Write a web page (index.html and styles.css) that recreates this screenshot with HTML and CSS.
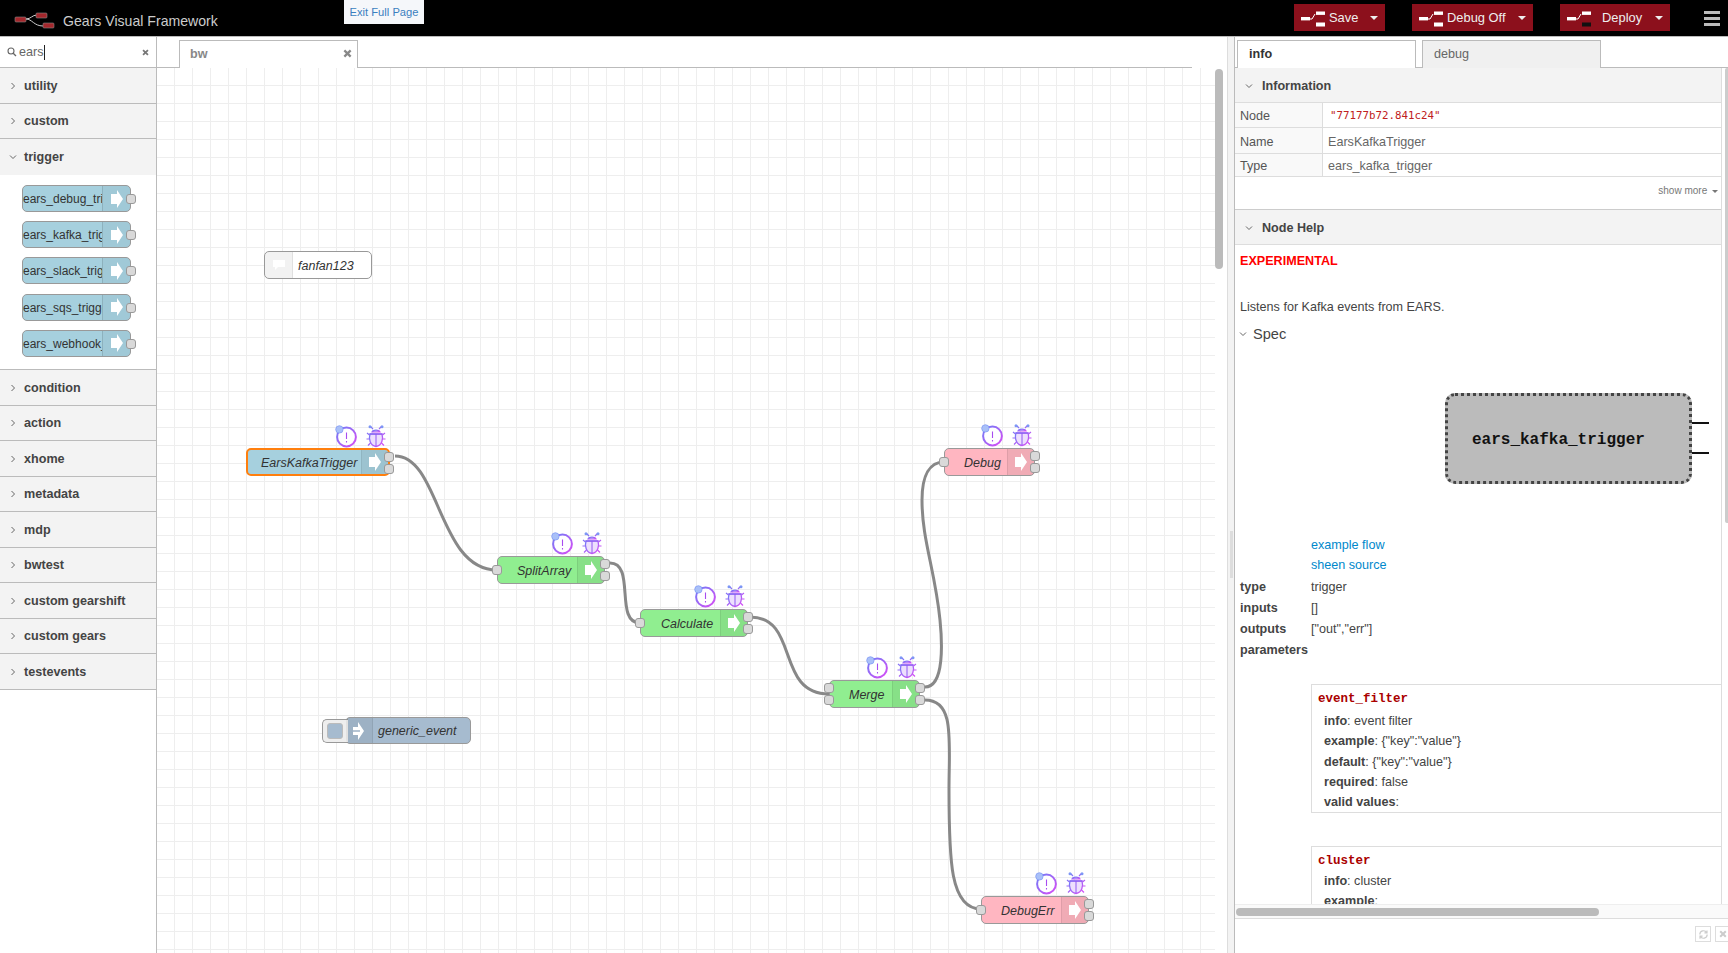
FILE: index.html
```html
<!DOCTYPE html>
<html lang="en">
<head>
  <meta charset="UTF-8" />
  <title>Gears Visual Framework</title>
  <link rel="stylesheet" href="styles.css">
</head>
<body>
  <svg class="defs" width="0" height="0">
    <defs>
      <symbol id="arrow" viewBox="0 0 12 18"><path d="M0 4H6V0L12 9L6 18V14H0Z" fill="#fff"/></symbol>
      <symbol id="chev-r" viewBox="0 0 8 8"><path d="M2.5 1L5.5 4L2.5 7" fill="none" stroke="#666" stroke-width="1"/></symbol>
      <symbol id="chev-d" viewBox="0 0 8 8"><path d="M1 2.5L4 5.5L7 2.5" fill="none" stroke="#666" stroke-width="1"/></symbol>
      <symbol id="cross" viewBox="0 0 8 8"><path d="M1.2 1.2L6.8 6.8M6.8 1.2L1.2 6.8" stroke="currentColor" stroke-width="2"/></symbol>
      <linearGradient id="purple" x1="0" y1="0" x2="1" y2="1">
        <stop offset="0" stop-color="#6f7cf7"/><stop offset="1" stop-color="#d84cf5"/>
      </linearGradient>
      <symbol id="alert" viewBox="0 0 22 23">
        <circle cx="11.5" cy="12" r="9.4" fill="#fff" stroke="url(#purple)" stroke-width="2"/>
        <circle cx="4.4" cy="4.4" r="3.7" fill="#a9c0f8" stroke="#7d96f5" stroke-width=".7"/>
        <path d="M11.5 7.5V14M11.5 16V17.4" stroke="#a84cf0" stroke-width="1.1"/>
      </symbol>
      <symbol id="bug" viewBox="0 0 20 23">
        <path d="M6 7C7 4.5 13 4.5 14 7Z" fill="#b9c3fb" stroke="url(#purple)" stroke-width="1.2"/>
        <path d="M4 9H16C17.5 14 16 20.5 10 21.5C4 20.5 2.5 14 4 9Z" fill="#eddffd" stroke="url(#purple)" stroke-width="1.3"/>
        <path d="M3.5 9H16.5M10 9V21" stroke="#9058f2" stroke-width="1"/>
        <path d="M7 4L4.5 1.5M13 4L15.5 1.5M3.5 10L1 8M16.5 10L19 8M3 14H.5M17 14H19.5M4.5 18L2 20.5M15.5 18L18 20.5" stroke="url(#purple)" stroke-width="1.2" fill="none"/>
        <circle cx="4" cy="1.8" r="1.5" fill="#7d96f5"/><circle cx="16" cy="1.8" r="1.5" fill="#7d96f5"/>
      </symbol>
      <symbol id="flow" viewBox="0 0 24 16">
        <path d="M9 8H11L14 3" fill="none" stroke="currentColor" stroke-width="1"/>
        <rect y="6" width="9" height="3.4" fill="currentColor"/>
        <rect x="15" y="0.5" width="9" height="3.4" fill="currentColor"/>
      </symbol>
    </defs>
  </svg>

  <header class="topbar">
    <div class="brand">
      <svg class="brand-logo" width="42" height="18" viewBox="0 0 42 18">
        <path d="M12 7C17 7 18 3 23 3M12 7C18 7 20 14 29 14" fill="none" stroke="#ccc" stroke-width="1"/>
        <rect x="1" y="5" width="11" height="5" rx="1" fill="#a3272c" stroke="#888" stroke-width=".6"/>
        <rect x="22" y="1" width="11" height="5" rx="1" fill="#a3272c" stroke="#888" stroke-width=".6"/>
        <rect x="29" y="11" width="11" height="5" rx="1" fill="#a3272c" stroke="#888" stroke-width=".6"/>
      </svg>
      <span class="brand-title">Gears Visual Framework</span>
    </div>
    <a class="exit-page">Exit Full Page</a>
    <div class="actions">
      <div class="btn btn-save">
        <svg class="btn-icon" width="24" height="16"><use href="#flow"/><rect x="15" y="11.5" width="9" height="4" fill="#fff"/></svg>
        <span>Save</span><i class="caret"></i>
      </div>
      <div class="btn btn-debug">
        <svg class="btn-icon" width="24" height="16"><use href="#flow"/><rect x="15" y="11.5" width="9" height="4" fill="#fff"/></svg>
        <span>Debug Off</span><i class="caret"></i>
      </div>
      <div class="btn btn-deploy">
        <svg class="btn-icon" width="24" height="16"><use href="#flow"/><rect x="15" y="11.5" width="9" height="4" fill="#111"/></svg>
        <span>Deploy</span><i class="caret"></i>
      </div>
      <div class="menu-btn"><i></i><i></i><i></i></div>
    </div>
  </header>

  <main class="main">
    <aside class="palette">
      <div class="search">
        <svg width="10" height="10" viewBox="0 0 10 10"><circle cx="4" cy="4" r="3" fill="none" stroke="#666" stroke-width="1.1"/><path d="M6.2 6.2L9 9" stroke="#666" stroke-width="1.3"/></svg>
        <span class="search-text">ears</span>
        <svg class="search-clear" width="7" height="7"><use href="#cross"/></svg>
      </div>
      <div class="cat"><svg width="8" height="8"><use href="#chev-r"/></svg>utility</div>
      <div class="cat"><svg width="8" height="8"><use href="#chev-r"/></svg>custom</div>
      <div class="cat cat-open"><svg width="8" height="8"><use href="#chev-d"/></svg>trigger</div>
      <div class="cat-list">
        <div class="pal-node"><span class="pal-label">ears_debug_trigger</span><span class="pal-icon"><svg width="12" height="18"><use href="#arrow"/></svg></span><i class="pal-port"></i></div>
        <div class="pal-node"><span class="pal-label">ears_kafka_trigger</span><span class="pal-icon"><svg width="12" height="18"><use href="#arrow"/></svg></span><i class="pal-port"></i></div>
        <div class="pal-node"><span class="pal-label">ears_slack_trigger</span><span class="pal-icon"><svg width="12" height="18"><use href="#arrow"/></svg></span><i class="pal-port"></i></div>
        <div class="pal-node"><span class="pal-label">ears_sqs_trigger</span><span class="pal-icon"><svg width="12" height="18"><use href="#arrow"/></svg></span><i class="pal-port"></i></div>
        <div class="pal-node"><span class="pal-label">ears_webhook_trigger</span><span class="pal-icon"><svg width="12" height="18"><use href="#arrow"/></svg></span><i class="pal-port"></i></div>
      </div>
      <div class="cat"><svg width="8" height="8"><use href="#chev-r"/></svg>condition</div>
      <div class="cat"><svg width="8" height="8"><use href="#chev-r"/></svg>action</div>
      <div class="cat"><svg width="8" height="8"><use href="#chev-r"/></svg>xhome</div>
      <div class="cat"><svg width="8" height="8"><use href="#chev-r"/></svg>metadata</div>
      <div class="cat"><svg width="8" height="8"><use href="#chev-r"/></svg>mdp</div>
      <div class="cat"><svg width="8" height="8"><use href="#chev-r"/></svg>bwtest</div>
      <div class="cat"><svg width="8" height="8"><use href="#chev-r"/></svg>custom gearshift</div>
      <div class="cat"><svg width="8" height="8"><use href="#chev-r"/></svg>custom gears</div>
      <div class="cat"><svg width="8" height="8"><use href="#chev-r"/></svg>testevents</div>
    </aside>

    <section class="workspace">
      <div class="ws-tabs">
        <div class="ws-tab"><span>bw</span><svg width="9" height="9"><use href="#cross"/></svg></div>
      </div>
      <div class="ws-body">
        <div class="canvas">
          <svg class="wires" width="1058" height="885" viewBox="157 68 1058 885">
            <path d="M395 456C440 456 438 570 497 570"/>
            <path d="M610 563C636 563 614 623 640 623"/>
            <path d="M750 617C800 617 775 694 829 694"/>
            <path d="M925 687C945 687 942 640 940 620C935 570 922 540 922 500C922 475 930 462 944 462"/>
            <path d="M925 700C955 700 949 740 949 790C949 860 950 909 981 909"/>
          </svg>

          <div class="comment"><span class="comment-icon"><svg width="14" height="12" viewBox="0 0 14 12"><path d="M1 1H13V8H6L3 11V8H1Z" fill="#fff"/></svg></span><span class="node-text">fanfan123</span></div>

          <div class="inject">
            <span class="inject-btn"><i></i></span>
            <span class="inject-icon"><svg width="12" height="20" viewBox="0 0 12 20"><path d="M0 6H5V1L11 10L5 19V14H0ZM0 9.3V10.7H7V9.3Z" fill="#fff"/></svg></span>
            <span class="node-text">generic_event</span>
          </div>

          <div class="node node-trigger node-selected n-kafka">
            <span class="node-text">EarsKafkaTrigger</span>
            <span class="node-icon"><svg width="12" height="18"><use href="#arrow"/></svg></span>
            <i class="port out-1"></i><i class="port out-2"></i>
            <div class="badges"><svg width="22" height="23"><use href="#alert"/></svg><svg width="20" height="23"><use href="#bug"/></svg></div>
          </div>

          <div class="node node-green n-split">
            <i class="port in"></i>
            <span class="node-text">SplitArray</span>
            <span class="node-icon"><svg width="12" height="18"><use href="#arrow"/></svg></span>
            <i class="port out-1"></i><i class="port out-2"></i>
            <div class="badges"><svg width="22" height="23"><use href="#alert"/></svg><svg width="20" height="23"><use href="#bug"/></svg></div>
          </div>

          <div class="node node-green n-calc">
            <i class="port in"></i>
            <span class="node-text">Calculate</span>
            <span class="node-icon"><svg width="12" height="18"><use href="#arrow"/></svg></span>
            <i class="port out-1"></i><i class="port out-2"></i>
            <div class="badges"><svg width="22" height="23"><use href="#alert"/></svg><svg width="20" height="23"><use href="#bug"/></svg></div>
          </div>

          <div class="node node-green n-merge">
            <i class="port in"></i><i class="port in-2"></i>
            <span class="node-text">Merge</span>
            <span class="node-icon"><svg width="12" height="18"><use href="#arrow"/></svg></span>
            <i class="port out-1"></i><i class="port out-2"></i>
            <div class="badges"><svg width="22" height="23"><use href="#alert"/></svg><svg width="20" height="23"><use href="#bug"/></svg></div>
          </div>

          <div class="node node-pink n-debug">
            <i class="port in"></i>
            <span class="node-text">Debug</span>
            <span class="node-icon"><svg width="12" height="18"><use href="#arrow"/></svg></span>
            <i class="port out-1"></i><i class="port out-2"></i>
            <div class="badges"><svg width="22" height="23"><use href="#alert"/></svg><svg width="20" height="23"><use href="#bug"/></svg></div>
          </div>

          <div class="node node-pink n-debugerr">
            <i class="port in"></i>
            <span class="node-text">DebugErr</span>
            <span class="node-icon"><svg width="12" height="18"><use href="#arrow"/></svg></span>
            <i class="port out-1"></i><i class="port out-2"></i>
            <div class="badges"><svg width="22" height="23"><use href="#alert"/></svg><svg width="20" height="23"><use href="#bug"/></svg></div>
          </div>
        </div>
        <div class="ws-scroll"><i></i></div>
      </div>
    </section>

    <div class="separator"><i></i></div>

    <aside class="sidebar">
      <div class="side-tabs">
        <div class="side-tab side-tab-on">info</div>
        <div class="side-tab">debug</div>
      </div>
      <div class="side-content">
        <div class="sec-head"><svg width="8" height="8"><use href="#chev-d"/></svg>Information</div>
        <div class="info-row info-row-node"><span class="info-key">Node</span><span class="info-val info-id">"77177b72.841c24"</span></div>
        <div class="info-row info-row-name"><span class="info-key">Name</span><span class="info-val">EarsKafkaTrigger</span></div>
        <div class="info-row info-row-type"><span class="info-key">Type</span><span class="info-val">ears_kafka_trigger</span></div>
        <div class="show-more">show more <i class="caret caret-small"></i></div>
        <div class="sec-head"><svg width="8" height="8"><use href="#chev-d"/></svg>Node Help</div>
        <div class="help">
          <div class="help-exp">EXPERIMENTAL</div>
          <p class="help-desc">Listens for Kafka events from EARS.</p>
          <div class="help-spec"><svg width="8" height="8"><use href="#chev-d"/></svg>Spec</div>
          <div class="diagram">
            <div class="diagram-box">ears_kafka_trigger</div>
            <div class="diagram-ports"><i></i><i></i></div>
          </div>
          <div class="help-links">
            <a>example flow</a>
            <a>sheen source</a>
          </div>
          <dl class="spec-list">
            <dt>type</dt><dd>trigger</dd>
            <dt>inputs</dt><dd>[]</dd>
            <dt>outputs</dt><dd>["out","err"]</dd>
            <dt>parameters</dt><dd></dd>
          </dl>
          <div class="param param-first">
            <div class="param-name">event_filter</div>
            <div class="param-line"><b>info</b>: event filter</div>
            <div class="param-line"><b>example</b>: {"key":"value"}</div>
            <div class="param-line"><b>default</b>: {"key":"value"}</div>
            <div class="param-line"><b>required</b>: false</div>
            <div class="param-line"><b>valid values</b>:</div>
          </div>
          <div class="param">
            <div class="param-name">cluster</div>
            <div class="param-line"><b>info</b>: cluster</div>
            <div class="param-line"><b>example</b>:</div>
          </div>
        </div>
      </div>
      <div class="side-hscroll"><i></i></div>
      <div class="side-foot">
        <span class="foot-btn"><svg width="11" height="11" viewBox="0 0 12 12"><path d="M2 6A4 4 0 0 1 9.5 4M10 6A4 4 0 0 1 2.5 8M9.8 1.5V4.3H7M2.2 10.5V7.7H5" fill="none" stroke="#ccc" stroke-width="1.3"/></svg></span>
        <span class="foot-btn"><svg width="8" height="8"><use href="#cross"/></svg></span>
      </div>
      <div class="side-vscroll"></div>
    </aside>
  </main>
</body>
</html>
```

FILE: styles.css
```css
* {
  box-sizing: border-box;
}

html, body {
  margin: 0;
  height: 100%;
  overflow: hidden;
}

body {
  font-family: "Liberation Sans", Arial, sans-serif;
  font-size: 12.6px;
  color: #555;
  background: #fff;
}

.defs {
  position: absolute;
}

/* Header */
.topbar {
  height: 37px;
  background: #000;
  border-bottom: 1px solid #bbb;
  display: flex;
  align-items: center;
  justify-content: space-between;
  position: relative;
}

.brand {
  display: flex;
  align-items: center;
  padding-left: 14px;
}

.brand-logo {
  margin-top: 5px;
  margin-right: 7px;
}

.brand-title {
  font-size: 14.1px;
  color: #ccc;
  margin-top: 5px;
}

.exit-page {
  position: absolute;
  left: 344px;
  top: 0;
  width: 80px;
  height: 24px;
  background: #f5f7fa;
  color: #3b7fbf;
  font-size: 11.2px;
  line-height: 24px;
  text-align: center;
}

.actions {
  display: flex;
  align-items: center;
  padding-right: 8px;
  gap: 27px;
}

.btn {
  height: 27px;
  margin-top: -1px;
  background: #8c101c;
  color: #eee;
  font-size: 12.9px;
  display: flex;
  align-items: center;
  padding: 0 7px;
  gap: 4px;
}

.btn-save { width: 91px; }
.btn-debug { width: 121px; }
.btn-deploy { width: 110px; }
.btn-deploy span { margin-left: 7px; }

.btn-icon {
  color: #fff;
  margin-top: 2px;
}

.caret {
  width: 0;
  height: 0;
  border-left: 4px solid transparent;
  border-right: 4px solid transparent;
  border-top: 4px solid #eee;
  margin-left: auto;
}

.menu-btn {
  width: 16px;
  margin-left: 7px;
  display: flex;
  flex-direction: column;
  gap: 3px;
}

.menu-btn i {
  height: 3px;
  background: #bbb;
}

/* Layout */
.main {
  display: flex;
  height: 916px;
}

/* Palette */
.palette {
  width: 157px;
  flex: none;
  border-right: 1px solid #bbb;
}

.search {
  height: 31px;
  border-bottom: 1px solid #bbb;
  display: flex;
  align-items: center;
  padding-left: 7px;
}

.search-text {
  margin-left: 2px;
  color: #666;
  line-height: 15px;
  border-right: 1px solid #222;
}

.search-clear {
  margin-left: auto;
  margin-right: 7px;
  color: #777;
}

.cat {
  height: 35.5px;
  background: #f3f3f3;
  border-bottom: 1px solid #bbb;
  font-weight: bold;
  color: #444;
  display: flex;
  align-items: center;
  padding: 1px 0 0 9px;
  gap: 7px;
}

.cat-open {
  border-bottom: none;
  padding-top: 0;
}

.cat-list {
  height: 195.5px;
  padding: 10.6px 0 0 22px;
  display: flex;
  flex-direction: column;
  gap: 9.2px;
  border-bottom: 1px solid #bbb;
}

.pal-node {
  width: 109px;
  height: 27px;
  background: #a6d0de;
  border: 1px solid #999;
  border-radius: 5px;
  display: flex;
  position: relative;
}

.pal-label {
  width: 79px;
  overflow: hidden;
  white-space: nowrap;
  line-height: 26px;
  font-size: 12px;
  color: #333;
}

.pal-icon {
  flex: 1;
  background: rgba(0, 0, 0, 0.03);
  border-left: 1px solid rgba(0, 0, 0, 0.12);
  border-radius: 0 4px 4px 0;
  display: flex;
  align-items: center;
  padding-left: 8px;
}

.pal-port {
  position: absolute;
  right: -6px;
  top: 8px;
  width: 10px;
  height: 10px;
  background: #d9d9d9;
  border: 1px solid #999;
  border-radius: 3px;
}

/* Workspace */
.workspace {
  width: 1070px;
  flex: none;
  display: flex;
  flex-direction: column;
}

.ws-tabs {
  height: 31px;
  width: 1035px;
  border-bottom: 1px solid #bbb;
  padding: 3px 0 0 22px;
  flex: none;
}

.ws-tab {
  width: 179px;
  height: 28px;
  background: #fff;
  border: 1px solid #bbb;
  border-bottom: none;
  display: flex;
  align-items: center;
  justify-content: space-between;
  padding: 0 5px 2px 10px;
  font-weight: bold;
  color: #888;
}

.ws-body {
  flex: 1;
  display: flex;
  overflow: hidden;
}

.canvas {
  width: 1058px;
  position: relative;
  overflow: hidden;
  background-image:
    linear-gradient(#eee 1px, transparent 1px),
    linear-gradient(90deg, #eee 1px, transparent 1px);
  background-size: 18px 18px;
  background-position: 17px 17px;
}

.ws-scroll {
  flex: 1;
  padding: 1px 4px 0 0;
  display: flex;
  justify-content: flex-end;
}

.ws-scroll i {
  width: 8px;
  height: 200px;
  background: #bbb;
  border-radius: 4px;
}

.wires {
  position: absolute;
  left: 0;
  top: 0;
}

.wires path {
  fill: none;
  stroke: #888;
  stroke-width: 3;
}

/* Flow nodes, placed on the free canvas */
.node {
  position: absolute;
  height: 28px;
  border: 1px solid #999;
  border-radius: 5px;
  display: flex;
  align-items: center;
}

.node-trigger { background: #a6d0de; }
.node-green { background: #90ee90; }
.node-pink { background: #ffb6c1; }

.node-selected {
  border: 2px solid #ff7f0e;
}

.n-kafka { left: 89px; top: 380px; width: 144px; }
.n-split { left: 340px; top: 488px; width: 108px; }
.n-calc { left: 483px; top: 541px; width: 108px; }
.n-merge { left: 672px; top: 612px; width: 91px; }
.n-debug { left: 787px; top: 380px; width: 91px; }
.n-debugerr { left: 824px; top: 828px; width: 108px; }

.node-text {
  flex: 1;
  font-size: 12.5px;
  font-style: italic;
  color: #333;
  padding: 1px 0 0 19px;
  white-space: nowrap;
}

.n-calc .node-text {
  padding-left: 20px;
}

.node-selected .node-text {
  padding-left: 13px;
}

.comment .node-text,
.inject .node-text {
  padding-left: 5px;
}

.node-icon {
  width: 27px;
  height: 100%;
  flex: none;
  background: rgba(0, 0, 0, 0.06);
  border-left: 1px solid rgba(0, 0, 0, 0.08);
  border-radius: 0 4px 4px 0;
  display: flex;
  align-items: center;
  padding-left: 7px;
}

.port {
  position: absolute;
  width: 10px;
  height: 10px;
  background: #d9d9d9;
  border: 1px solid #999;
  border-radius: 3px;
}

.port.out-1 { right: -6px; top: 2px; }
.port.out-2 { right: -6px; top: 14px; }
.port.in { left: -6px; top: 8px; }
.port.in-2 { left: -6px; top: 14px; }
.n-merge .port.in { top: 2px; }

.badges {
  position: absolute;
  right: 2px;
  top: -25px;
  display: flex;
  gap: 9px;
}

.comment {
  position: absolute;
  left: 107px;
  top: 183px;
  width: 108px;
  height: 28px;
  background: #fff;
  border: 1px solid #999;
  border-radius: 5px;
  display: flex;
  align-items: center;
}

.comment-icon {
  width: 28px;
  height: 100%;
  background: rgba(0, 0, 0, 0.05);
  border-right: 1px solid rgba(0, 0, 0, 0.08);
  border-radius: 4px 0 0 4px;
  display: flex;
  align-items: center;
  justify-content: center;
}

.inject {
  position: absolute;
  left: 188px;
  top: 649px;
  width: 126px;
  height: 27px;
  background: #a6bbcf;
  border: 1px solid #999;
  border-radius: 5px;
  display: flex;
  align-items: center;
}

.inject-btn {
  position: absolute;
  left: -24px;
  top: 1px;
  width: 26px;
  height: 24px;
  background: #eee;
  border: 1px solid #999;
  border-radius: 5px 0 0 5px;
  border-right: none;
  padding: 3px 0 0 4px;
}

.inject-btn i {
  display: block;
  width: 16px;
  height: 16px;
  background: #a6bbcf;
  border: 1px solid #bbb;
  border-radius: 3px;
}

.inject-icon {
  width: 27px;
  height: 100%;
  flex: none;
  background: rgba(0, 0, 0, 0.05);
  border-right: 1px solid rgba(0, 0, 0, 0.08);
  border-radius: 4px 0 0 4px;
  display: flex;
  align-items: center;
  padding-left: 7px;
  position: relative;
}

/* Separator */
.separator {
  width: 8px;
  flex: none;
  background: #f3f3f3;
  border-left: 1px solid #ddd;
  border-right: 1px solid #bbb;
  padding-top: 494px;
}

.separator i {
  display: block;
  width: 3px;
  height: 47px;
  margin-left: 2px;
  background: #ddd;
}

/* Sidebar */
.sidebar {
  flex: 1;
  display: flex;
  flex-direction: column;
  position: relative;
  min-width: 0;
}

.side-tabs {
  height: 31px;
  flex: none;
  border-bottom: 1px solid #bbb;
  padding: 3px 0 0 2px;
  display: flex;
  gap: 6px;
}

.side-tab {
  width: 179px;
  height: 28px;
  border: 1px solid #bbb;
  border-bottom: none;
  background: #f0f0f0;
  color: #666;
  line-height: 27px;
  padding-left: 11px;
}

.side-tab-on {
  background: #fff;
  color: #333;
  font-weight: bold;
}

.side-content {
  height: 836px;
  flex: none;
  width: 487px;
  border-right: 1px solid #ddd;
  overflow: hidden;
}

.sec-head {
  height: 35px;
  background: #f3f3f3;
  border-bottom: 1px solid #ddd;
  font-weight: bold;
  color: #444;
  display: flex;
  align-items: center;
  padding: 2px 0 0 10px;
  gap: 9px;
}

.info-row {
  display: flex;
  border-bottom: 1px solid #ddd;
  color: #666;
}

.info-row-node { height: 25px; line-height: 26px; }
.info-row-name { height: 26px; line-height: 29px; }
.info-row-type { height: 23px; line-height: 24px; }

.info-key {
  width: 88px;
  background: #f9f9f9;
  border-right: 1px solid #ddd;
  color: #555;
  padding-left: 5px;
}

.info-val {
  padding-left: 5px;
}

.info-id {
  font-family: "DejaVu Sans Mono", monospace;
  font-size: 10.8px;
  color: #c02020;
  padding-left: 7px;
}

.show-more {
  height: 33px;
  border-bottom: 1px solid #ccc;
  font-size: 10px;
  color: #777;
  text-align: right;
  padding: 8px 3px 0 0;
}

.caret-small {
  display: inline-block;
  border-left-width: 3px;
  border-right-width: 3px;
  border-top: 3px solid #777;
  vertical-align: middle;
  margin-left: 2px;
}

.help {
  padding-left: 5px;
  color: #444;
  line-height: 20px;
}

.help-exp {
  margin-top: 6px;
  color: #f00;
  font-weight: bold;
}

.help-desc {
  margin: 26px 0 0;
}

.help-spec {
  margin: 5px 0 0 -1px;
  font-size: 14.6px;
  line-height: 24px;
  display: flex;
  align-items: center;
  gap: 6px;
}

.diagram {
  margin: 47px 0 0 205px;
  display: flex;
  align-items: stretch;
  height: 91px;
}

.diagram-box {
  width: 247px;
  background: #bbb;
  border: 3px dotted #444;
  border-radius: 10px;
  font-family: "Liberation Mono", monospace;
  font-weight: bold;
  font-size: 16px;
  color: #111;
  line-height: 88px;
  padding-left: 24px;
}

.diagram-ports {
  padding-top: 29px;
  display: flex;
  flex-direction: column;
  gap: 27.5px;
}

.diagram-ports i {
  display: block;
  width: 17px;
  height: 2px;
  background: #111;
}

.help-links {
  margin: 51px 0 0 71px;
}

.help-links a {
  display: block;
  color: #0088cc;
}

.spec-list {
  margin: 2px 0 0;
  display: grid;
  grid-template-columns: 71px 1fr;
  grid-auto-rows: 21px;
  line-height: 21px;
  white-space: nowrap;
}

.spec-list dt {
  font-weight: bold;
}

.spec-list dd {
  margin: 0;
}

.param {
  margin: 33px 0 0 71px;
  border: 1px solid #ddd;
  border-right: none;
  padding: 4px 0 0 6px;
}

.param-first {
  margin-top: 23px;
  height: 129px;
}

.param-name {
  font-family: "Liberation Mono", monospace;
  font-size: 12.5px;
  font-weight: bold;
  color: #a00;
  line-height: 20px;
  margin-bottom: 0;
}

.param-first .param-name {
  margin-bottom: 2px;
}

.param-line {
  padding-left: 6px;
  line-height: 20.3px;
}

.side-hscroll {
  height: 15px;
  flex: none;
  background: #fafafa;
  border-top: 1px solid #eee;
  border-bottom: 1px solid #ddd;
  padding: 3px 0 0 1px;
}

.side-hscroll i {
  display: block;
  width: 363px;
  height: 8px;
  background: #bbb;
  border-radius: 4px;
}

.side-foot {
  flex: 1;
  display: flex;
  justify-content: flex-end;
  gap: 4px;
  padding: 7px 0 0 0;
  margin-right: -3px;
}

.foot-btn {
  width: 16px;
  height: 16px;
  border: 1px solid #ddd;
  color: #ccc;
  display: flex;
  align-items: center;
  justify-content: center;
}

.side-vscroll {
  position: absolute;
  right: 0;
  top: 31px;
  width: 3px;
  height: 455px;
  background: #ccc;
  border-radius: 2px 0 0 2px;
}
```
